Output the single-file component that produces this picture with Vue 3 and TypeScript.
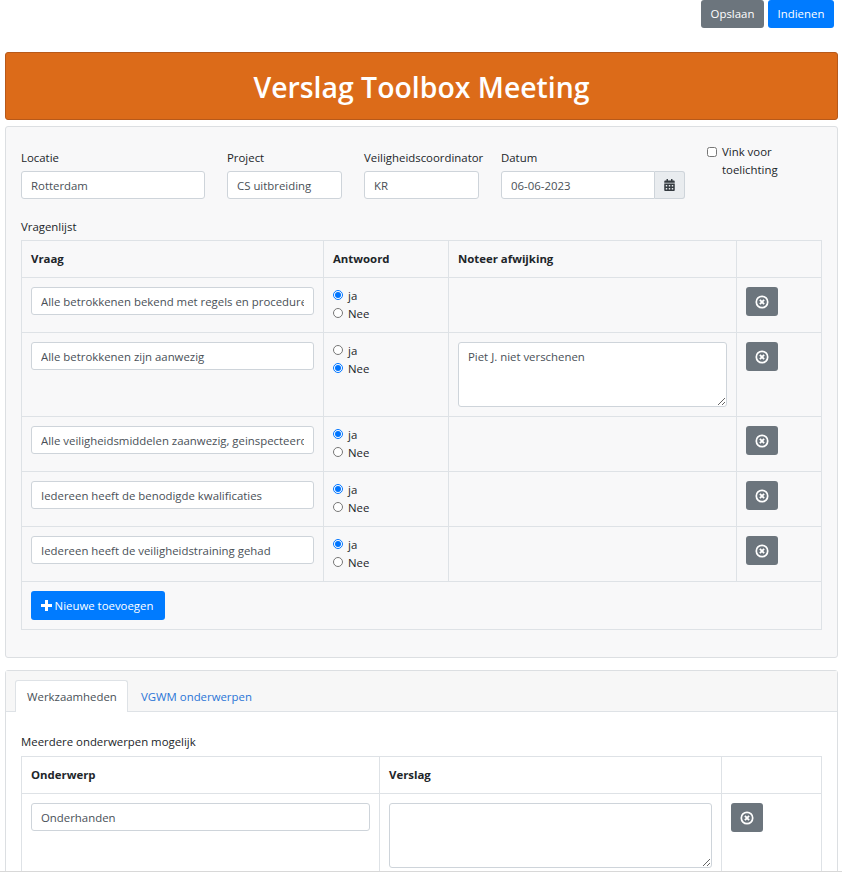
<script setup lang="ts">
interface Row { vraag: string; ja: boolean; note?: string }
const rows: Row[] = [
  { vraag: 'Alle betrokkenen bekend met regels en procedures', ja: true },
  { vraag: 'Alle betrokkenen zijn aanwezig', ja: false, note: 'Piet J. niet verschenen' },
  { vraag: 'Alle veiligheidsmiddelen zaanwezig, geinspecteerd en in orde', ja: true },
  { vraag: 'Iedereen heeft de benodigde kwalificaties', ja: true },
  { vraag: 'Iedereen heeft de veiligheidstraining gehad', ja: true },
]
</script>

<template>
  <div class="page">
    <div class="topbar">
      <button class="btn grey" type="button">Opslaan</button>
      <button class="btn blue" type="button">Indienen</button>
    </div>
    <h1 class="banner">Verslag Toolbox Meeting</h1>
    <section class="card main">
      <div class="fields">
        <div class="field w184"><label>Locatie</label><input class="ctl" value="Rotterdam" /></div>
        <div class="field w115"><label>Project</label><input class="ctl" value="CS uitbreiding" /></div>
        <div class="field w115"><label>Veiligheidscoordinator</label><input class="ctl" value="KR" /></div>
        <div class="field w184">
          <label>Datum</label>
          <div class="group">
            <input class="ctl joined" value="06-06-2023" />
            <span class="addon">
              <svg width="11" height="12" viewBox="0 0 448 512" fill="#343a40"><path d="M0 464c0 26.5 21.500 48 48 48h352c26.500 0 48-21.500 48-48V192H0v272zm320-196c0-6.600 5.400-12 12-12h40c6.600 0 12 5.400 12 12v40c0 6.600-5.400 12-12 12h-40c-6.600 0-12-5.400-12-12v-40zm0 128c0-6.600 5.400-12 12-12h40c6.600 0 12 5.400 12 12v40c0 6.600-5.400 12-12 12h-40c-6.600 0-12-5.400-12-12v-40zM192 268c0-6.600 5.400-12 12-12h40c6.600 0 12 5.400 12 12v40c0 6.600-5.400 12-12 12h-40c-6.600 0-12-5.400-12-12v-40zm0 128c0-6.600 5.400-12 12-12h40c6.600 0 12 5.400 12 12v40c0 6.600-5.400 12-12 12h-40c-6.600 0-12-5.400-12-12v-40zM64 268c0-6.600 5.400-12 12-12h40c6.600 0 12 5.400 12 12v40c0 6.600-5.400 12-12 12H76c-6.600 0-12-5.400-12-12v-40zm0 128c0-6.600 5.400-12 12-12h40c6.600 0 12 5.400 12 12v40c0 6.600-5.400 12-12 12H76c-6.600 0-12-5.400-12-12v-40zM400 64h-48V16c0-8.800-7.200-16-16-16h-32c-8.800 0-16 7.200-16 16v48H160V16c0-8.800-7.200-16-16-16h-32c-8.800 0-16 7.200-16 16v48H48C21.500 64 0 85.500 0 112v48h448v-48c0-26.500-21.500-48-48-48z"/></svg>
            </span>
          </div>
        </div>
        <label class="vink"><input type="checkbox" /><span>Vink voor<br />toelichting</span></label>
      </div>

      <div class="caption">Vragenlijst</div>
      <table class="tbl">
        <colgroup><col style="width:302px" /><col style="width:125px" /><col style="width:288px" /><col /></colgroup>
        <thead><tr><th>Vraag</th><th>Antwoord</th><th>Noteer afwijking</th><th></th></tr></thead>
        <tbody>
          <tr v-for="(r, i) in rows" :key="i">
            <td><input class="ctl" :value="r.vraag" /></td>
            <td>
              <label class="radio"><input type="radio" :name="'q' + i" :checked="r.ja" /><span class="opt">ja</span></label>
              <label class="radio"><input type="radio" :name="'q' + i" :checked="!r.ja" /><span class="opt">Nee</span></label>
            </td>
            <td><textarea v-if="r.note" class="ctl area" :value="r.note"></textarea></td>
            <td>
              <button class="btn grey del" type="button" aria-label="Verwijderen">
                <svg width="14" height="14" viewBox="0 0 14 14" fill="none" stroke="#fff"><circle cx="7" cy="7" r="5.7" stroke-width="1.7" /><path d="M4.900 4.900l4.200 4.200M9.100 4.900l-4.200 4.200" stroke-width="1.900" /></svg>
              </button>
            </td>
          </tr>
          <tr>
            <td colspan="4">
              <button class="btn blue add" type="button">
                <svg width="11" height="11" viewBox="0 0 11 11" fill="#fff"><path d="M4 0h3v4h4v3H7v4H4V7H0V4h4z" /></svg>
                Nieuwe toevoegen
              </button>
            </td>
          </tr>
        </tbody>
      </table>
    </section>

    <section class="card second">
      <div class="tabhead">
        <a class="tab active">Werkzaamheden</a>
        <a class="tab">VGWM onderwerpen</a>
      </div>
      <div class="tabbody">
        <div class="caption2">Meerdere onderwerpen mogelijk</div>
        <table class="tbl">
          <colgroup><col style="width:358px" /><col style="width:342px" /><col /></colgroup>
          <thead><tr><th>Onderwerp</th><th>Verslag</th><th></th></tr></thead>
          <tbody>
            <tr>
              <td><input class="ctl" value="Onderhanden" /></td>
              <td><textarea class="ctl area"></textarea></td>
              <td>
                <button class="btn grey del" type="button" aria-label="Verwijderen">
                  <svg width="14" height="14" viewBox="0 0 14 14" fill="none" stroke="#fff"><circle cx="7" cy="7" r="5.7" stroke-width="1.7" /><path d="M4.900 4.900l4.200 4.200M9.100 4.900l-4.200 4.200" stroke-width="1.900" /></svg>
                </button>
              </td>
            </tr>
          </tbody>
        </table>
      </div>
    </section>
    <div class="footer"></div>
  </div>
</template>

<style>
html, body { margin: 0; background: #fff; overflow: hidden; }
</style>

<style scoped>
.page {
  position: relative;
  height: 880px;
  overflow: hidden;
  box-sizing: border-box;
  padding: 0 4px 0 5px;
  font-family: "Open Sans", "Noto Sans", sans-serif;
  font-size: 11.4px;
  line-height: 18px;
  color: #212529;
}
.topbar { display: flex; justify-content: flex-end; gap: 4px; padding-right: 4px; height: 52px; }
.btn {
  border: 0;
  border-radius: 3px;
  color: #fff;
  font: inherit;
  padding: 0;
  display: inline-flex;
  align-items: center;
  justify-content: center;
}
.grey { background: #6c757d; }
.blue { background: #007bff; }
.topbar .btn { height: 28px; }
.topbar .grey { width: 63px; }
.topbar .blue { width: 66px; }
.banner {
  margin: 0 0 6px;
  height: 68px;
  box-sizing: border-box;
  background: #dc6b19;
  border: 1px solid #b7591a;
  border-radius: 3px;
  color: #fff;
  font-size: 28.4px;
  font-weight: 600;
  line-height: 68px;
  text-align: center;
}
.card { border: 1px solid #dcdfe2; border-radius: 3px; box-sizing: border-box; }
.main { background: #f8f8f9; height: 532px; padding: 15px; margin-bottom: 12px; }
.fields { display: flex; gap: 22px; height: 70px; }
.field { display: flex; flex-direction: column; padding-top: 7px; }
.field label { height: 22px; white-space: nowrap; }
.w184 { width: 184px; }
.w115 { width: 115px; }
.ctl {
  display: block;
  width: 100%;
  height: 28px;
  box-sizing: border-box;
  border: 1px solid #ced4da;
  border-radius: 3px;
  background: #fff;
  color: #495057;
  font: inherit;
  padding: 0 9px;
  outline: none;
}
.group { display: flex; }
.joined { flex: 1; min-width: 0; border-radius: 3px 0 0 3px; }
.addon {
  width: 30px;
  flex: none;
  height: 28px;
  box-sizing: border-box;
  background: #e9ecef;
  border: 1px solid #ced4da;
  border-left: 0;
  border-radius: 0 3px 3px 0;
  display: flex;
  align-items: center;
  justify-content: center;
}
.vink { display: flex; align-items: flex-start; gap: 5px; line-height: 18px; margin-top: 1px; }
.vink input { width: 10px; height: 10px; margin: 4px 0 0; }
.caption { height: 28px; line-height: 30px; }
.tbl { width: 100%; table-layout: fixed; border-collapse: collapse; }
.tbl th, .tbl td { border: 1px solid #dee2e6; padding: 9px; text-align: left; vertical-align: top; }
.tbl th { font-weight: 700; height: 18px; }
.radio { display: flex; align-items: center; gap: 5px; height: 18px; }
.radio input { width: 10px; height: 10px; margin: -2px 0 0; accent-color: #0075ff; }
.opt { line-height: 20px; }
.area { height: 65px; padding: 5px 9px; resize: vertical; }
.del { width: 32px; height: 29px; }
.add { height: 29px; width: 134px; gap: 3px; padding-right: 2px; box-sizing: border-box; }
.second { background: #fff; height: 300px; }
.tabhead {
  display: flex;
  height: 41px;
  box-sizing: border-box;
  padding: 9px 9px 0;
  background: #f7f7f7;
  border-bottom: 1px solid #dee2e6;
}
.tab {
  height: 32px;
  box-sizing: border-box;
  padding: 0 12px;
  line-height: 32px;
  color: #2a75d6;
  border: 1px solid transparent;
  border-bottom: 0;
}
.tab.active { width: 113px; padding: 0 0 0 11px; color: #495057; background: #fff; border-color: #dee2e6; border-radius: 3px 3px 0 0; }
.tabbody { padding: 21px 15px 0; }
.caption2 { height: 23px; }
.footer {
  position: absolute;
  left: 0;
  right: 0;
  top: 871px;
  bottom: 0;
  background: #fff;
  border-top: 1px solid #d8d8d8;
}
</style>
